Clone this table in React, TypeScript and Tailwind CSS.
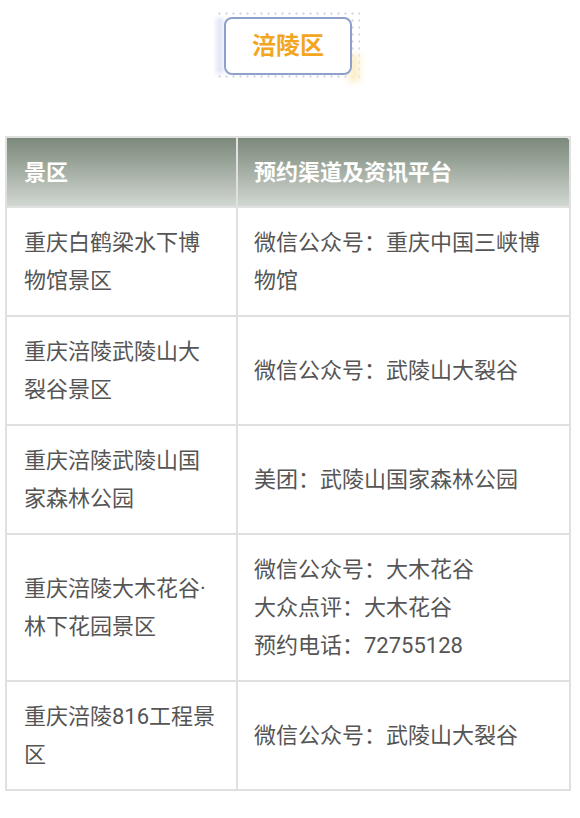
const rows: { name: string; channels: string[] }[] = [
  { name: '重庆白鹤梁水下博物馆景区', channels: ['微信公众号：重庆中国三峡博物馆'] },
  { name: '重庆涪陵武陵山大裂谷景区', channels: ['微信公众号：武陵山大裂谷'] },
  { name: '重庆涪陵武陵山国家森林公园', channels: ['美团：武陵山国家森林公园'] },
  {
    name: '重庆涪陵大木花谷·林下花园景区',
    channels: ['微信公众号：大木花谷', '大众点评：大木花谷', '预约电话：72755128'],
  },
  { name: '重庆涪陵816工程景区', channels: ['微信公众号：武陵山大裂谷'] },
];

export default function App() {
  return (
    <div
      className="min-h-[818px] w-[580px] bg-white pt-[10px]"
      style={{ fontFamily: 'Roboto, "Noto Sans CJK SC", sans-serif' }}
    >
      {/* 区名标签 */}
      <div className="flex justify-center pr-[4px]">
        <div className="relative rounded-[4px] bg-[radial-gradient(#d9ddeb_1.3px,transparent_1.3px)] bg-[length:7px_7px] px-[8px] py-[7px]">
          <div className="absolute left-0 top-[8px] h-[56px] w-[8px] bg-[#e3e7f8] blur-[2px]" />
          <div className="absolute bottom-0 right-0 h-[28px] w-[12px] bg-[#fbefcc] blur-[3px]" />
          <div className="relative flex h-[58px] w-[128px] items-center justify-center rounded-[8px] border-2 border-[#8ea0cc] bg-white">
            <span className="text-[24px] font-bold text-[#f3a51e]">涪陵区</span>
          </div>
        </div>
      </div>

      <div className="mt-[54px] px-[5px]">
        <table className="w-[566px] table-fixed border-collapse">
          <thead>
            <tr className="h-[70px] bg-gradient-to-b from-[#7a887a] to-[#d3d8d3]">
              <th className="w-[231px] border-2 border-[#e0e0e0] pl-[17px] text-left text-[22px] font-bold text-white">
                景区
              </th>
              <th className="rounded-tr-[6px] border-2 border-[#e0e0e0] pl-[16px] text-left text-[22px] font-bold text-white">
                预约渠道及资讯平台
              </th>
            </tr>
          </thead>
          <tbody>
            {rows.map((row) => (
              <tr key={row.name}>
                <td className="border-2 border-[#e0e0e0] px-[17px] pt-[16px] pb-[15px] align-middle text-[22px] leading-[38px] text-[#555]">
                  {row.name}
                </td>
                <td className="border-2 border-[#e0e0e0] px-[16px] pt-[16px] pb-[15px] align-middle text-[22px] leading-[38px] text-[#555]">
                  {row.channels.map((c) => (
                    <div key={c}>{c}</div>
                  ))}
                </td>
              </tr>
            ))}
          </tbody>
        </table>
      </div>
    </div>
  );
}
